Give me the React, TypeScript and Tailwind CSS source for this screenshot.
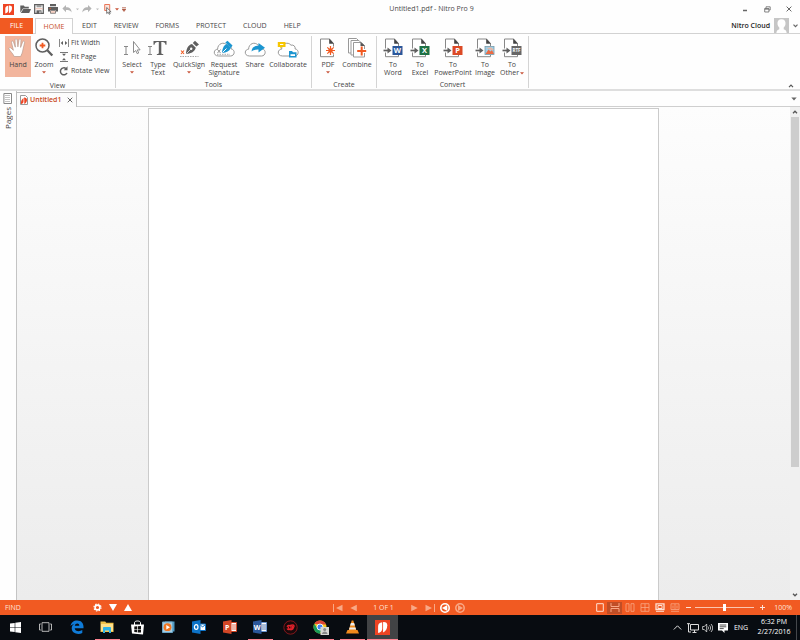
import type { ReactNode } from "react";

const ORANGE = "#f15a22";
const GREY = "#5f5f5f";

type IconProps = { w?: number; h?: number; box?: string; children: ReactNode };

function Icon({ w = 22, h = 22, box, children }: IconProps) {
  return (
    <svg width={w} height={h} viewBox={box ?? `0 0 ${w} ${h}`} fill="none" aria-hidden="true" className="shrink-0">
      {children}
    </svg>
  );
}

function Caret({ w = 4, h = 3, color = "#c8553a" }: { w?: number; h?: number; color?: string }) {
  return (
    <Icon w={w} h={h} box="0 0 4 3">
      <path d="M0 .3h4L2 2.6z" fill={color} />
    </Icon>
  );
}

function NitroLogo({ size = 11 }: { size?: number }) {
  return (
    <Icon w={size} h={size} box="0 0 16 16">
      <rect width="16" height="16" fill="#ee4423" />
      <path d="M3.300 13.800V6.600c0-2.200 1.500-3.800 4.400-4.100v7c-.2 2.400-1.900 3.900-4.400 4.300z" fill="#fff" />
      <path d="M8.600 2.300c2.700-.3 4.500.9 4.500 3.400 0 3.300-1.300 6.200-4.500 7.700z" fill="#fff" />
    </Icon>
  );
}

/* ---------- Title bar ---------- */

function QuickButton({ label, className, children }: { label: string; className: string; children: ReactNode }) {
  return (
    <button type="button" aria-label={label} className={`flex h-4 items-center justify-center ${className}`}>
      {children}
    </button>
  );
}

function TitleBar() {
  return (
    <header className="flex h-[18px] items-center pl-[3px]">
      <div className="flex items-center">
        <NitroLogo />
        <QuickButton label="Open" className="ml-1 w-[14px]">
          <Icon w={11} h={10}>
            <path d="M.3 8.500V1.500h3.500l1 1.300h4v1.600H3z" fill={GREY} />
            <path d="M3.300 5H11L9.200 9H.8z" fill={GREY} />
          </Icon>
        </QuickButton>
        <QuickButton label="Save" className="w-[14px]">
          <Icon w={10} h={10}>
            <path d="M.7.7h8.600v8.600H.7z" stroke={GREY} strokeWidth="1.300" fill="#fff" />
            <path d="M2.500 1h5v2.300h-5z" fill="#9a9a9a" />
            <path d="M1.400 4.300h7.200v1H1.400z" fill="#e9b3a3" />
            <path d="M2.500 6.300h5v3.200h-5z" fill={GREY} />
            <path d="M5.500 7.200h1v2h-1z" fill="#fff" />
          </Icon>
        </QuickButton>
        <QuickButton label="Print" className="w-[14px]">
          <Icon w={10} h={10}>
            <path d="M2 0h6v2.300H2zM0 3h10v4.500H8V6H2v1.500H0z" fill={GREY} />
            <path d="M2.500 6.500h5v2.800h-5z" fill="#f8d3c6" stroke={GREY} strokeWidth=".7" />
            <path d="M1.500 4h1.500v.8H1.500z" fill={ORANGE} />
          </Icon>
        </QuickButton>
        <QuickButton label="Undo" className="w-[14px]">
          <Icon w={10} h={9}>
            <path d="M4 0v2.200c4 0 5.500 2 5.600 5.300C8.500 5.600 7 5 4 5v2.200L.4 3.600z" fill="#b4b4b4" />
          </Icon>
        </QuickButton>
        <QuickButton label="Undo history" className="w-[6px]"><Caret w={3} color="#bbb" /></QuickButton>
        <QuickButton label="Redo" className="w-[14px]">
          <Icon w={10} h={9}>
            <path d="M6 0v2.200C2 2.200.5 4.200.4 7.500 1.500 5.600 3 5 6 5v2.200l3.600-3.600z" fill="#b4b4b4" />
          </Icon>
        </QuickButton>
        <QuickButton label="Redo history" className="w-[7px]"><Caret w={3} color="#bbb" /></QuickButton>
        <QuickButton label="Select tool" className="w-[14px]">
          <Icon w={10} h={12}>
            <path d="M1.700 1.500h5v6h-5z" fill="#fbe4dc" stroke="#e8775a" />
            <path d="M3.700 4.500v6l1.500-1.300 1 2.100 1-.5-1-2h1.900z" fill="#fff" stroke="#555" strokeWidth=".8" />
          </Icon>
        </QuickButton>
        <QuickButton label="Tool list" className="w-[4px]"><Caret /></QuickButton>
        <QuickButton label="Customize toolbar" className="w-[10px]">
          <Icon w={4} h={5}>
            <path d="M0 .5h4M0 2l4 0L2 4.500z" stroke="#b05a45" strokeWidth=".6" fill="#b05a45" />
          </Icon>
        </QuickButton>
      </div>
      <h1 className="flex-1 text-center text-[#4a4a4a]">Untitled1.pdf - Nitro Pro 9</h1>
      <div className="flex h-4 items-center text-[#666]">
        <button type="button" aria-label="Minimize" className="flex w-[22px] justify-center">
          <Icon w={6} h={7}><path d="M1 4.500h4" stroke="currentColor" strokeWidth="1.500" /></Icon>
        </button>
        <button type="button" aria-label="Restore" className="flex w-[22px] justify-center">
          <Icon w={7} h={7}>
            <path d="M2 2V.8h4.200V4H5M.7 2.500h4.200V6H.7zM.7 3.200h4.200" stroke="currentColor" strokeWidth=".8" />
          </Icon>
        </button>
        <button type="button" aria-label="Close" className="flex w-[22px] justify-center">
          <Icon w={6} h={6}><path d="M.6.6l4.800 4.800M5.400.6L.6 5.400" stroke="currentColor" /></Icon>
        </button>
      </div>
    </header>
  );
}

/* ---------- Ribbon tabs ---------- */

const menuTabs = ["EDIT", "REVIEW", "FORMS", "PROTECT", "CLOUD", "HELP"];

function MenuTabs() {
  return (
    <nav className="flex h-4 items-stretch border-b border-[#d2d2d2]">
      <button type="button" className="mr-[2px] -mb-px w-[33px] bg-[#f15a22] text-white">FILE</button>
      <button type="button" className="mr-px -mb-px w-[38px] border border-b-0 border-[#d2d2d2] bg-white text-[#c8502b]">
        HOME
      </button>
      <div className="flex items-stretch gap-px">
        {menuTabs.map((tab) => (
          <button key={tab} type="button" className="px-2">{tab}</button>
        ))}
      </div>
      <button type="button" className="ml-auto flex items-center gap-1 pr-[2px] text-[#222]">
        <span className="font-semibold">Nitro Cloud</span>
        <Icon w={15} h={15}>
          <path d="M0 0h15v15H0z" fill="#c6c6c6" />
          <path d="M7.500 1.200c2.800 0 4.300 2 4 4.700-.2 1.700-1 2.700-1.800 3.600v1.700c1.500.6 2.500.8 3 3.800H2.300c.5-3 1.500-3.200 3-3.800V9.500C4.500 8.600 3.700 7.600 3.500 5.900 3.200 3.200 4.700 1.200 7.500 1.200z" fill="#fff" />
        </Icon>
        <Icon w={5} h={4}><path d="M.5.7l2 2 2-2" stroke="#666" strokeWidth="1.200" /></Icon>
      </button>
    </nav>
  );
}

/* ---------- Ribbon icons ---------- */

function HandIcon() {
  return (
    <Icon>
      <path
        d="M7.200 19.500C6 16.600 3.200 14.300 2 12c-.5-1.300.9-1.900 2-1l2.400 2.300L4.500 5.400c-.3-1.500 1.500-2 2-.5l1.800 5.300L8 3c0-1.600 2-1.600 2.200 0l.7 6.900 1-7c.2-1.500 2.200-1.300 2.100.2l-.4 7.300 2-5.500c.6-1.400 2.300-.8 2 .7l-1.700 7.300c-.4 3.100-1.500 4.500-2.200 6.600z"
        fill="#fff" stroke="#b9998d" strokeWidth=".7"
      />
    </Icon>
  );
}

function ZoomIcon() {
  return (
    <Icon>
      <circle cx="9.500" cy="8.500" r="6.500" stroke={GREY} strokeWidth="1.500" />
      <path d="M14.300 13.200l5 5.300" stroke={GREY} strokeWidth="2.300" />
      <path d="M9.500 5.700v5.600M6.700 8.500h5.600" stroke={ORANGE} strokeWidth="1.800" />
    </Icon>
  );
}

const IBEAM = "M3 9.500h4M3 17.500h4M5 9.500v8";

function SelectIcon() {
  return (
    <Icon>
      <path d={IBEAM} stroke="#888" />
      <path d="M12.500 4.500v11l2.300-2 1.400 3.200 1.500-.7-1.400-3.100h2.800z" stroke="#808080" fill="#fff" strokeWidth=".9" />
    </Icon>
  );
}

function TypeIcon() {
  return (
    <Icon>
      <path d={IBEAM} transform="translate(-2 0)" stroke="#888" />
      <path d="M6.500 4h13v3.700h-1C18.200 5.800 17.500 5 15.500 5h-1.200v10.700c0 1 .5 1.300 2 1.500v.8H9.800v-.8c1.500-.2 2-.5 2-1.500V5h-1.200C8.600 5 7.900 5.800 7.500 7.700h-1z" fill={GREY} />
    </Icon>
  );
}

function QuickSignIcon() {
  return (
    <Icon>
      <path d="M8 17c.3-4.500 1.500-8.700 6-10l3.800 3.700c-1.200 4.600-5.300 5.700-9.800 6.300z" fill={GREY} />
      <path d="M14.800 6l2.200-2.200 4 3.800-2.700 2z" fill={GREY} />
      <circle cx="13.200" cy="11.700" r="1.200" fill="#fff" />
      <path d="M8.500 16.500l4.300-4.300" stroke="#fff" strokeWidth=".7" />
      <path d="M3 13.500l3 3.500M6 13.500L3 17" stroke={ORANGE} strokeWidth="1.100" />
      <path d="M2 19.500h18.500" stroke="#aaa" strokeDasharray="1.500 1" />
    </Icon>
  );
}

const CLOUD = "M5.500 18C0 18 0 11.500 4.600 11.200 4.600 5.500 11 3.300 14 7.200c2.600-.7 4.500 1.200 4.200 3.800C22.500 11.500 22 18 17.500 18z";

function CloudIcon({ children }: { children: ReactNode }) {
  return (
    <Icon box="0 -1 22 22">
      <path d={CLOUD} stroke="#999" fill="#fff" />
      {children}
    </Icon>
  );
}

function RequestIcon() {
  return (
    <CloudIcon>
      <path d="M9 15c.2-4 1.500-8 5-9l4 3.500c-1.500 4-4.500 5-9 5.500z" fill="#1b95d0" />
      <path d="M12.300 4.500l2.200-1.800 5 4.700-1.500 2.300z" fill="#1b95d0" />
      <path d="M9.500 14.500l4-4" stroke="#fff" />
      <path d="M4.500 11.500l3 3.500M7.500 11.500l-3 3.500" stroke="#888" strokeWidth=".9" />
      <path d="M4 16.300h13" stroke="#aaa" strokeDasharray="1.500 1" />
    </CloudIcon>
  );
}

function ShareIcon() {
  return (
    <CloudIcon>
      <path d="M7.500 13.500c.3-3.700 2.500-5.700 7-5.700V5l6.500 4.800-6.500 4.600v-2.800c-3.200-.1-5 .4-7 1.900z" fill="#1b95d0" />
    </CloudIcon>
  );
}

function CollaborateIcon() {
  return (
    <CloudIcon>
      <path d="M.8 4h7.700v5H5L3.300 10.800V9H.8z" fill="#f7c600" />
      <path d="M3 6.500h3.300" stroke="#fff" />
      <path d="M12 13h3l1 1.200h3.500v5.300H12z" fill="#1b95d0" />
      <path d="M13.500 16.200h4.500v1.800h-4.500z" fill="#fff" />
    </CloudIcon>
  );
}

function PageOutline() {
  return (
    <>
      <path d="M3.500 2h9l4 4.500v13.200h-13z" stroke="#888" fill="#fff" />
      <path d="M12.200 1.500l4.800 5.200h-4.800z" fill="#444" />
    </>
  );
}

function PdfIcon() {
  return (
    <Icon>
      <PageOutline />
      <circle cx="13.500" cy="13.500" r="5" fill="#fff" />
      <path d="M13.500 9v9M9 13.500h9M10.300 10.300l6.400 6.400M16.700 10.300l-6.400 6.400" stroke={ORANGE} strokeWidth="1.200" />
      <circle cx="13.500" cy="13.500" r="2.200" fill={ORANGE} />
    </Icon>
  );
}

function CombineIcon() {
  return (
    <Icon>
      <path d="M2.500 1.500h8l3 3V16h-11z" stroke="#999" fill="#fff" />
      <path d="M5 3.500h8l3 3V18H5z" stroke="#999" fill="#fff" />
      <path d="M7.500 5.500h8l3 3v11.500h-11z" stroke="#999" fill="#fff" />
      <path d="M14.500 5l4.500 4h-4.500z" fill="#555" />
      <path d="M15.700 9.500v9M11.200 14h9" stroke="#fff" strokeWidth="4" />
      <path d="M15.700 9.500v9M11.200 14h9" stroke={ORANGE} strokeWidth="2" />
    </Icon>
  );
}

function ConvertIcon({ fill, letter }: { fill: string; letter?: string }) {
  return (
    <Icon>
      <PageOutline />
      <path d="M1 13.500h9" stroke="#fff" strokeWidth="4" />
      <path d="M1.500 13.500h5" stroke={GREY} strokeWidth="1.700" />
      <path d="M5.500 10.500l4 3-4 3z" fill={GREY} />
      <rect x="10.500" y="9" width="10" height="9" fill={fill} />
      {letter ? (
        <text x="15.500" y={letter.length > 1 ? 15 : 16.200} textAnchor="middle" fill="#fff" fontSize={letter.length > 1 ? 4.500 : 7.500} fontWeight="700">
          {letter}
        </text>
      ) : (
        <>
          <rect x="11" y="9.500" width="9" height="8" fill="#9fd0e8" stroke="#7799aa" strokeWidth=".8" />
          <path d="M11.500 17l3-4.500 2 2 1.500-1.500 2 4z" fill="#ed6b43" />
          <path d="M12 11c3 .5 5 2.500 8 2l-3-2.500z" fill="#f3b39a" />
        </>
      )}
    </Icon>
  );
}

/* ---------- Ribbon ---------- */

type Tool = { lines: string[]; icon: ReactNode; width: string; caret?: "below" | "inline" };

function ToolButton({ lines, icon, width, caret, active }: Tool & { active?: boolean }) {
  return (
    <button
      type="button"
      className={`flex h-[41px] flex-col items-center pt-px ${width} ${active ? "bg-[#f2b59d]" : ""}`}
    >
      <span className="mb-[2px]">{icon}</span>
      {lines.map((line, i) => (
        <span key={line} className="flex items-center gap-px whitespace-nowrap">
          {line}
          {caret === "inline" && i === lines.length - 1 && <Caret />}
        </span>
      ))}
      {caret === "below" && <span className="flex h-[7px] items-center"><Caret /></span>}
    </button>
  );
}

function Group({ title, className, inset, children }: { title: string; className: string; inset: string; children: ReactNode }) {
  return (
    <section className={`flex flex-col border-r border-[#d4d4d4] ${className}`}>
      <div className={`flex ${inset}`}>{children}</div>
      <h2 className="mt-[3px] text-center leading-[9px]">{title}</h2>
    </section>
  );
}

const tools: Tool[] = [
  { lines: ["Select"], icon: <SelectIcon />, width: "w-[26px]", caret: "below" },
  { lines: ["Type", "Text"], icon: <TypeIcon />, width: "w-[26px]" },
  { lines: ["QuickSign"], icon: <QuickSignIcon />, width: "w-[36px]", caret: "below" },
  { lines: ["Request", "Signature"], icon: <RequestIcon />, width: "w-[34px]" },
  { lines: ["Share"], icon: <ShareIcon />, width: "w-[28px]" },
  { lines: ["Collaborate"], icon: <CollaborateIcon />, width: "w-[38px]" },
];

const create: Tool[] = [
  { lines: ["PDF"], icon: <PdfIcon />, width: "w-[26px]", caret: "below" },
  { lines: ["Combine"], icon: <CombineIcon />, width: "w-[32px]" },
];

const convert: Tool[] = [
  { lines: ["To", "Word"], icon: <ConvertIcon fill="#2b579a" letter="W" />, width: "w-[28px]" },
  { lines: ["To", "Excel"], icon: <ConvertIcon fill="#1e7145" letter="X" />, width: "w-[26px]" },
  { lines: ["To", "PowerPoint"], icon: <ConvertIcon fill="#dc4a26" letter="P" />, width: "w-[40px]" },
  { lines: ["To", "Image"], icon: <ConvertIcon fill="#fff" />, width: "w-[24px]" },
  { lines: ["To", "Other"], icon: <ConvertIcon fill="#666" letter="RTF" />, width: "w-[30px]", caret: "inline" },
];

function Ribbon() {
  return (
    <div className="flex h-[57px] border-b-2 border-[#dedede] pt-[2px] pb-px">
      <Group title="View" className="w-[116px]" inset="pl-[5px]">
        <ToolButton lines={["Hand"]} icon={<HandIcon />} width="w-[26px]" active />
        <ToolButton lines={["Zoom"]} icon={<ZoomIcon />} width="w-[26px]" caret="below" />
        <div className="flex flex-col pl-[2px]">
          <button type="button" className="flex h-[14px] items-center gap-[2px]">
            <Icon w={10} h={10}>
              <path d="M.5 1v8M9.500 1v8" stroke="#888" />
              <path d="M1.700 5L4 3v4zM8.300 5L6 3v4z" fill={GREY} />
            </Icon>
            Fit Width
          </button>
          <button type="button" className="flex h-[14px] items-center gap-[2px]">
            <Icon w={10} h={10}>
              <path d="M1 .5h8M1 9.500h8" stroke="#777" />
              <path d="M5 4L3 1.700h4zM5 6L3 8.300h4z" fill={GREY} />
            </Icon>
            Fit Page
          </button>
          <button type="button" className="flex h-[14px] items-center gap-[2px]">
            <Icon w={10} h={10}>
              <path d="M7 2.500a3.500 3.500 0 1 0 1 4.500" stroke={GREY} strokeWidth="1.500" />
              <path d="M8.500.3v4H4.800z" fill={GREY} />
            </Icon>
            Rotate View
          </button>
        </div>
      </Group>
      <Group title="Tools" className="w-[196px]" inset="pl-[3px]">
        {tools.map((tool) => <ToolButton key={tool.lines.join(" ")} {...tool} />)}
      </Group>
      <Group title="Create" className="w-[65px]" inset="pl-[3px]">
        {create.map((tool) => <ToolButton key={tool.lines.join(" ")} {...tool} />)}
      </Group>
      <Group title="Convert" className="w-[152px]" inset="pl-[2px]">
        {convert.map((tool) => <ToolButton key={tool.lines.join(" ")} {...tool} />)}
      </Group>
      <button type="button" aria-label="Collapse ribbon" className="mt-auto mr-[6px] ml-auto flex h-[4px] items-center">
        <Icon w={6} h={4}><path d="M1 3.200l2-2 2 2" stroke="#555" strokeWidth="1.200" /></Icon>
      </button>
    </div>
  );
}

/* ---------- Document area ---------- */

function PagesPanel() {
  return (
    <aside className="flex w-4 flex-col items-center gap-[3px] pt-[2px] pr-[2px]">
      <Icon w={9} h={11}>
        <path d="M.9.500h7.600v10H.9z" stroke="#888" fill="#fff" />
        <path d="M2 2.500h5M2 4.500h5M2 6.500h5M2 8.500h5" stroke="#aaa" strokeWidth=".7" />
      </Icon>
      <button type="button" className="rotate-180 text-[8px] leading-[9px] [writing-mode:vertical-rl]">Pages</button>
    </aside>
  );
}

function Workspace() {
  return (
    <main className="flex min-h-0 flex-1">
      <PagesPanel />
      <div className="flex min-w-0 flex-1 flex-col border-l border-[#c4c4c4]">
        <div className="flex h-4 items-stretch border-b border-[#cfcfcf] pt-px">
          <div className="-mb-px -ml-px flex w-[61px] items-center border border-b-0 border-[#bdbdbd] bg-[#fcfcfc] pl-[3px]">
            <Icon w={8} h={10}>
              <path d="M.5.5h5l2 2v7h-7z" stroke="#999" fill="#fff" />
              <path d="M1 9c-.2-3 .5-4.500 2.500-6v3.500C3.400 8 2.500 8.800 1 9zM4 2.500c2 0 3.200 1 3 2.500-.1 1.800-.9 3-2.700 4V5z" fill="#ee4423" />
            </Icon>
            <span className="ml-[2px] font-semibold text-[#c9491a]">Untitled1</span>
            <button type="button" aria-label="Close Untitled1" className="mr-[3px] ml-auto">
              <Icon w={6} h={6}><path d="M.7.7l4.600 4.600M5.300.7L.7 5.300" stroke="#666" /></Icon>
            </button>
          </div>
          <button type="button" aria-label="Open documents" className="mr-[3px] ml-auto flex items-center">
            <Caret w={6} h={4} color="#666" />
          </button>
        </div>
        <div className="flex min-h-0 flex-1">
          <div className="flex flex-1 justify-center bg-linear-to-b from-[#fdfdfd] to-[#ececec] pt-px">
            <article aria-label="Page 1" className="w-[66%] border border-b-0 border-[#cbcbcb] bg-white" />
          </div>
          <div className="flex w-[10px] flex-col items-center bg-[#f0f0f0]">
            <button type="button" aria-label="Scroll up" className="flex h-[10px] items-center">
              <Icon w={6} h={4}><path d="M1 3.200l2-2 2 2" stroke="#555" strokeWidth="1.300" /></Icon>
            </button>
            <div className="flex w-full flex-1 flex-col px-px">
              <div className="h-[74%] bg-[#cdcdcd]" />
            </div>
            <button type="button" aria-label="Scroll down" className="flex h-[10px] items-center">
              <Icon w={6} h={4}><path d="M1 .8l2 2 2-2" stroke="#555" strokeWidth="1.300" /></Icon>
            </button>
          </div>
        </div>
      </div>
    </main>
  );
}

/* ---------- Status bar ---------- */

const PALE = "#f9a886";

const layouts: { label: string; icon: ReactNode; active?: boolean }[] = [
  { label: "Single page", icon: <path d="M1.700.7h6.600v7.600H1.700z" stroke="#ffe0d3" /> },
  { label: "Continuous", active: true, icon: <path d="M1 0v3.500h8V0M1 9V5.500h8V9" stroke={PALE} /> },
  { label: "Facing", icon: <path d="M1 .7h3v7.600H1zM6 .7h3v7.600H6z" stroke={PALE} strokeWidth=".8" /> },
  { label: "Continuous facing", icon: <path d="M1 .7h8v7.600H1zM5 .7v7.600M1 4.500h8" stroke={PALE} strokeWidth=".8" /> },
  {
    label: "Full screen",
    icon: <><path d="M1 .8h8v5.700H1z" stroke="#ffe0d3" strokeWidth="1.300" /><path d="M3 2.500h4v3H3zM1 8.300h8" stroke="#ffe0d3" /></>,
  },
  {
    label: "Presentation",
    icon: <path d="M1 .8h8v5.700H1zM5 1v5M3 2.500v3M7 2.500v3M1 8.300h8" stroke={PALE} strokeWidth=".8" />,
  },
];

function StatusButton({ label, width, children }: { label: string; width: string; children: ReactNode }) {
  return (
    <button type="button" aria-label={label} className={`flex h-full items-center justify-center ${width}`}>
      {children}
    </button>
  );
}

function StatusBar() {
  return (
    <footer className="flex h-[15px] items-center bg-[#f15a22] text-white">
      <div className="flex h-full flex-1 items-center">
        <input aria-label="Find" placeholder="FIND" className="w-[90px] bg-transparent pl-[5px] outline-none placeholder:text-[#ffe3d8]" />
        <StatusButton label="Find options" width="w-[15px]">
          <Icon w={9} h={9}>
            <circle cx="4.500" cy="4.500" r="2.400" stroke="#fff" strokeWidth="1.600" />
            <circle cx="4.500" cy="4.500" r="3.500" stroke="#fff" strokeWidth="1.200" strokeDasharray="1.400 1.350" />
          </Icon>
        </StatusButton>
        <StatusButton label="Find next" width="w-[15px]">
          <Icon w={8} h={7}><path d="M0 0h8L4 7z" fill="#fff" /></Icon>
        </StatusButton>
        <StatusButton label="Find previous" width="w-[15px]">
          <Icon w={8} h={7}><path d="M0 7h8L4 0z" fill="#fff" /></Icon>
        </StatusButton>
      </div>
      <div className="flex h-full items-center pl-[6px]">
        <StatusButton label="First page" width="w-[15px]">
          <Icon w={10} h={8}><path d="M.5 0v8" stroke={PALE} /><path d="M9.500.7v6.600L3 4z" fill={PALE} /></Icon>
        </StatusButton>
        <StatusButton label="Previous page" width="w-[15px]">
          <Icon w={7} h={8}><path d="M6.800.7v6.600L.3 4z" fill={PALE} /></Icon>
        </StatusButton>
        <input aria-label="Page" defaultValue="1 OF 1" className="w-[46px] bg-transparent text-center text-[#ffe3d8] outline-none" />
        <StatusButton label="Next page" width="w-[15px]">
          <Icon w={7} h={8}><path d="M.2.7v6.600L6.700 4z" fill={PALE} /></Icon>
        </StatusButton>
        <StatusButton label="Last page" width="w-[16px]">
          <Icon w={10} h={8}><path d="M9.500 0v8" stroke={PALE} /><path d="M.5.7v6.600L7 4z" fill={PALE} /></Icon>
        </StatusButton>
        <StatusButton label="Previous view" width="w-[15px]">
          <Icon w={10} h={10}><circle cx="5" cy="5" r="4.200" stroke="#fff" strokeWidth="1.600" /><path d="M7.300 2v6L2 5z" fill="#fff" /></Icon>
        </StatusButton>
        <StatusButton label="Next view" width="w-[15px]">
          <Icon w={10} h={10}><circle cx="5" cy="5" r="4.200" stroke={PALE} strokeWidth="1.500" /><path d="M3 2v6l5-3z" fill={PALE} /></Icon>
        </StatusButton>
      </div>
      <div className="flex h-full flex-1 items-center justify-end pr-[8px]">
        {layouts.map(({ label, icon, active }) => (
          <button
            key={label}
            type="button"
            aria-label={label}
            className={`flex h-3 w-[15px] items-center justify-center ${active ? "bg-[#c04e26]" : ""}`}
          >
            <Icon w={10} h={9}>{icon}</Icon>
          </button>
        ))}
        <StatusButton label="Zoom out" width="w-[13px]">
          <Icon w={5} h={5}><path d="M0 2.500h5" stroke="#ffe3d8" /></Icon>
        </StatusButton>
        <input
          type="range"
          aria-label="Zoom level"
          defaultValue={50}
          className="h-[9px] w-[59px] appearance-none bg-transparent [&::-webkit-slider-runnable-track]:h-px [&::-webkit-slider-runnable-track]:bg-[#fbc5b0] [&::-webkit-slider-thumb]:-mt-[3px] [&::-webkit-slider-thumb]:h-[7px] [&::-webkit-slider-thumb]:w-[3px] [&::-webkit-slider-thumb]:appearance-none [&::-webkit-slider-thumb]:bg-white"
        />
        <StatusButton label="Zoom in" width="w-[16px]">
          <Icon w={5} h={5}><path d="M0 2.500h5M2.500 0v5" stroke="#ffe3d8" /></Icon>
        </StatusButton>
        <output className="w-[22px] text-right text-[#ffe3d8]">100%</output>
      </div>
    </footer>
  );
}

/* ---------- Taskbar ---------- */

function OfficeIcon({ fill, light, letter }: { fill: string; light: string; letter: string }) {
  return (
    <Icon w={14} h={14}>
      <path d="M7 2.500h6.500v9H7z" fill="#fff" stroke={light} />
      <path d="M9 5h4M9 7h4M9 9h4" stroke={fill} strokeWidth=".8" />
      <path d="M0 1.500L8.500 0v14L0 12.500z" fill={fill} />
      <text x="4.200" y="9.500" textAnchor="middle" fill="#fff" fontSize="7" fontWeight="700">{letter}</text>
    </Icon>
  );
}

const apps: { label: string; icon: ReactNode; open?: boolean; focused?: boolean }[] = [
  {
    label: "Start",
    icon: <Icon w={11} h={11}><path d="M0 1.500L4.700.9v4.300H0zM5.300.8L11 0v5.200H5.300zM0 5.800h4.700v4.300L0 9.500zM5.300 5.800H11V11l-5.700-.8z" fill="#fff" /></Icon>,
  },
  {
    label: "Task view",
    icon: <Icon w={13} h={10}><path d="M3 .7h7v8.600H3zM1.800 2H.5v6h1.300M11.200 2h1.300v6h-1.300" stroke="#c8c8c8" strokeWidth=".9" /></Icon>,
  },
  {
    label: "Edge",
    icon: (
      <Icon w={14} h={14}>
        <path d="M.5 6.200C1 2.500 3.700.5 7.200.5c4.300 0 6.300 3 6.300 6.200v1.500H4.700c.2 3.200 4.600 3.700 7.600 1.900v3C8 15.200 1.700 13.500 1.700 8.300c0-2 1.100-3.600 2.900-4.500C2.700 4.200 1.300 5 .5 6.200zm4.300-.4h4.500c0-3.100-4-2.900-4.500 0z" fill="#0f7bd8" />
      </Icon>
    ),
  },
  {
    label: "File Explorer",
    open: true,
    icon: (
      <Icon w={14} h={12}>
        <path d="M.5.500h4.700l1 1.300h7.300V11H.5z" fill="#f0c24a" />
        <path d="M1 3h12v7H1z" fill="#ffe08a" />
        <path d="M3 12V7c0-.7.5-1 1-1h6c.6 0 1 .4 1 1v5H9V9.500H5V12z" fill="#2fb2e6" />
      </Icon>
    ),
  },
  {
    label: "Store",
    icon: (
      <Icon w={13} h={15}>
        <path d="M0 4.500h13L12 14.500 1 13.500z" fill="#fff" />
        <path d="M3.500 5V2.500c.3-2 5.700-2 6 0V5" stroke="#fff" />
        <path d="M3.300 6.500l2.700-.2v2.600H3.300zM6.700 6.300l3.300-.3v2.900H6.700zM3.300 9.600H6v2.700l-2.700-.3zM6.700 9.600H10v3l-3.300-.2z" fill="#111" />
      </Icon>
    ),
  },
  {
    label: "Media Player",
    icon: (
      <Icon w={13} h={12}>
        <path d="M3 .5h9.500v10H3z" fill="#4f9bc4" />
        <path d="M.5 1h10v10.500H.5z" fill="#a6cce0" stroke="#6aa7c8" />
        <circle cx="5.500" cy="6.200" r="3.900" fill="#ef7622" />
        <path d="M4.300 4v4.400L8 6.200z" fill="#fff" />
      </Icon>
    ),
  },
  {
    label: "Outlook",
    icon: (
      <Icon w={14} h={14}>
        <path d="M7 4h6.500v6.500H7z" fill="#fff" stroke="#0c72c6" />
        <path d="M8 4.500L10.500 7l3-2.500" stroke="#0c72c6" />
        <path d="M0 1.500L8.500 0v14L0 12.500z" fill="#0c72c6" />
        <ellipse cx="4.200" cy="7" rx="1.800" ry="2.300" stroke="#fff" strokeWidth="1.200" />
      </Icon>
    ),
  },
  { label: "PowerPoint", icon: <OfficeIcon fill="#d24726" light="#d24726" letter="P" /> },
  { label: "Word", open: true, icon: <OfficeIcon fill="#2b579a" light="#6b93cf" letter="W" /> },
  {
    label: "Recorder",
    icon: (
      <Icon w={15} h={15}>
        <circle cx="7.500" cy="7.500" r="6.700" stroke="#a01a20" strokeWidth=".8" fill="#19090b" />
        <path d="M4 6.700c.8-1.500 2.500-1.500 3.500-.5M4 8.500c1 1.700 3 1.500 3.500 0M8 4.500v6M8.300 5.300c2.700-1 3.400.8 2.200 2.200-.3 1.500-1.200 2-2.500 2M5 6.500l1 2.500M9.500 6v3" stroke="#e3222b" strokeWidth="1.300" />
      </Icon>
    ),
  },
  {
    label: "Chrome",
    open: true,
    icon: (
      <Icon w={16} h={15}>
        <circle cx="7" cy="7" r="6.500" fill="#f6c922" />
        <path d="M1.300 3.800A6.500 6.500 0 0 1 13 4.500H7z" fill="#dc4437" />
        <path d="M1.300 3.800A6.500 6.500 0 0 0 7 13.500l2-4-4.500-1z" fill="#1a9c58" />
        <circle cx="7" cy="7" r="3" fill="#4285f4" stroke="#fff" strokeWidth=".9" />
        <path d="M7.500 7H16v8H7.500z" fill="#d7d7d2" />
        <circle cx="11.700" cy="9.500" r="1.500" fill="#888" />
        <path d="M9 14c0-3.500 5.500-3.500 5.500 0z" fill="#888" />
      </Icon>
    ),
  },
  {
    label: "VLC",
    open: true,
    icon: (
      <Icon w={13} h={14}>
        <path d="M1.500 10h10l1.500 3.500H0z" fill="#f08a1c" />
        <path d="M5.700.5h1.600l3.200 10.500h-8z" fill="#f08a1c" />
        <path d="M4.900 3h3.200l.8 2.500H4.100zM3.500 7.500h6L10 9.500H3z" fill="#eee" />
      </Icon>
    ),
  },
  { label: "Nitro Pro", open: true, focused: true, icon: <NitroLogo size={15} /> },
];

function Taskbar() {
  return (
    <footer className="flex h-[25px] items-stretch justify-between bg-[#080c11] text-white">
      <nav className="grid w-[398px] grid-cols-13">
        {apps.map(({ label, icon, open, focused }) => (
          <button
            key={label}
            type="button"
            aria-label={label}
            className={`flex flex-col items-center ${focused ? "bg-[#414345]" : ""}`}
          >
            <span className="flex flex-1 items-center">{icon}</span>
            <span className={`h-px ${focused ? "w-full" : "w-[25px]"} ${open ? "bg-[#ff8492]" : ""}`} />
          </button>
        ))}
      </nav>
      <div className="flex items-center pr-[3px]">
        <button type="button" aria-label="Show hidden icons" className="flex w-[15px] justify-center">
          <Icon w={9} h={5}><path d="M.8 4.500l3.700-3.700 3.700 3.700" stroke="#ddd" /></Icon>
        </button>
        <button type="button" aria-label="Network" className="flex w-[15px] justify-center">
          <Icon w={12} h={10}><path d="M3.500 1.500h8v5.500h-8zM5.500 9.500h4M7.500 7v2.500M0 .7h3M1.500.7v8.300h2.500" stroke="#ddd" /></Icon>
        </button>
        <button type="button" aria-label="Volume" className="flex w-[15px] justify-center">
          <Icon w={11} h={10}><path d="M.6 3.500h1.700L4.700 1v8L2.300 6.500H.6zM6 3.500c.8 1 .8 2 0 3M7.500 2.300c1.500 1.800 1.500 3.600 0 5.400M9 1c2.200 2.700 2.200 5.300 0 8" stroke="#ddd" strokeWidth=".8" /></Icon>
        </button>
        <button type="button" aria-label="Notifications" className="flex w-[15px] justify-center">
          <Icon w={10} h={10}><path d="M0 0h10v7.500H6.500V10L4 7.500H0z" fill="#fff" /><path d="M1.700 2h6.600M1.700 3.800h6.600M1.700 5.600h4" stroke="#222" strokeWidth=".8" /></Icon>
        </button>
        <button type="button" className="w-[22px]">ENG</button>
        <div className="flex w-[44px] flex-col items-center pb-px leading-[10px]">
          <time>6:32 PM</time>
          <time>2/27/2016</time>
        </div>
        <button type="button" aria-label="Show desktop" className="h-full w-px bg-[#44474b]" />
      </div>
    </footer>
  );
}

export default function App() {
  return (
    <div className="flex h-screen flex-col overflow-hidden bg-[#fefefe] font-['Open_Sans','Noto_Sans',sans-serif] text-[7px] leading-[8px] text-[#444]">
      <TitleBar />
      <MenuTabs />
      <Ribbon />
      <Workspace />
      <StatusBar />
      <Taskbar />
    </div>
  );
}
